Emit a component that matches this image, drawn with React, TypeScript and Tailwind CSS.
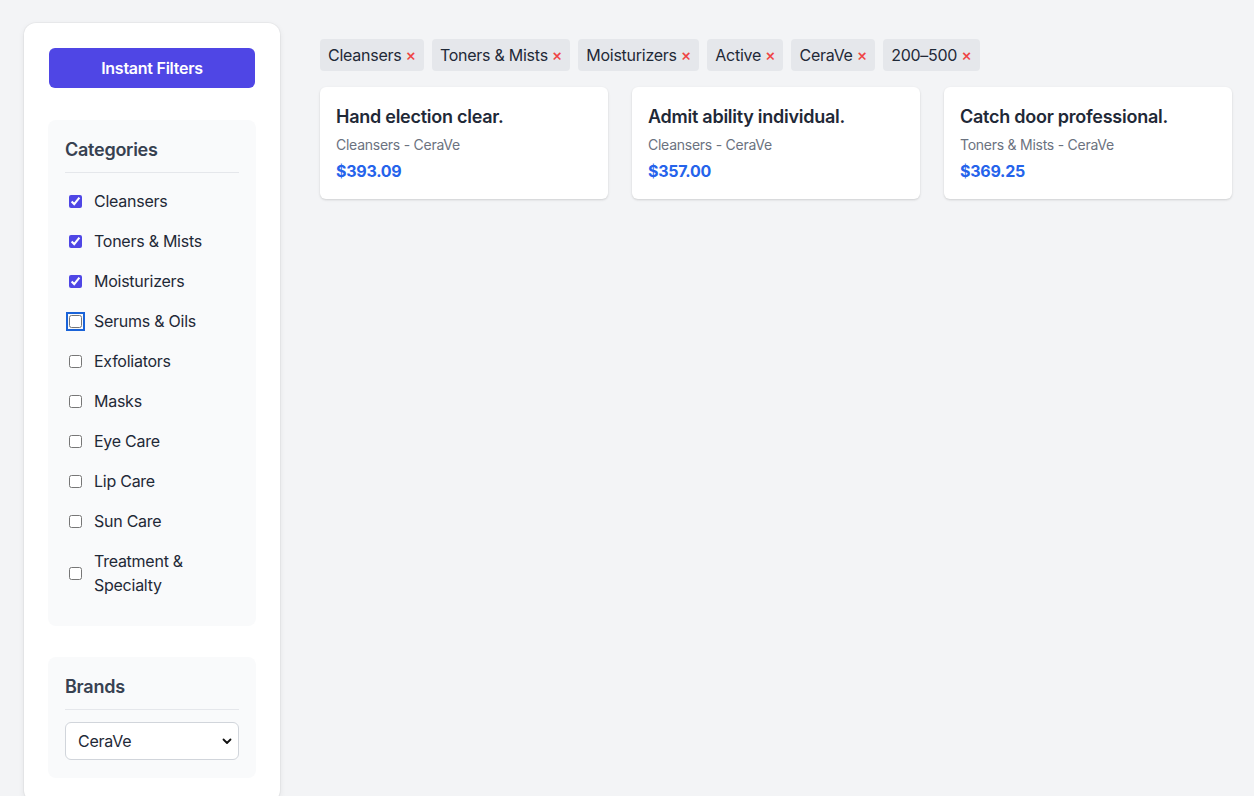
import React from "react";

const categories = [
  { name: "Cleansers", checked: true },
  { name: "Toners & Mists", checked: true },
  { name: "Moisturizers", checked: true },
  { name: "Serums & Oils", checked: false, focus: true },
  { name: "Exfoliators", checked: false },
  { name: "Masks", checked: false },
  { name: "Eye Care", checked: false },
  { name: "Lip Care", checked: false },
  { name: "Sun Care", checked: false },
  { name: "Treatment & Specialty", checked: false },
];

const chips = ["Cleansers", "Toners & Mists", "Moisturizers", "Active", "CeraVe", "200–500"];

const products = [
  { title: "Hand election clear.", sub: "Cleansers - CeraVe", price: "$393.09" },
  { title: "Admit ability individual.", sub: "Cleansers - CeraVe", price: "$357.00" },
  { title: "Catch door professional.", sub: "Toners & Mists - CeraVe", price: "$369.25" },
];

export default function App() {
  return (
    <div
      className="min-h-[796px] bg-[#f3f4f6] text-[#1f2937] flex items-start pl-6 pr-[22px] pt-[23px] tracking-[-0.016em]"
      style={{ fontFamily: "Inter, 'Noto Sans', sans-serif" }}
    >
      <aside className="w-[256px] shrink-0 bg-white rounded-xl shadow-[0_0_0_1px_rgba(0,0,0,0.03),0_2px_6px_rgba(0,0,0,0.08)] p-6">
        <button className="block w-[calc(100%-2px)] mx-px mt-px h-10 rounded-md bg-[#4f46e5] text-white font-semibold text-base tracking-[-0.016em]">
          Instant Filters
        </button>

        <section className="mt-8 bg-[#f9fafb] rounded-lg px-[17px] pt-4 pb-[21px]">
          <h3 className="text-lg font-semibold text-[#374151] pb-2 border-b border-[#e5e7eb] leading-7">
            Categories
          </h3>
          <ul className="mt-2">
            {categories.map((c) => (
              <li key={c.name} className="flex items-center py-2">
                <input
                  type="checkbox"
                  defaultChecked={c.checked}
                  className={
                    "ml-1 mr-3 w-[13px] h-[13px] shrink-0 accent-[#4f46e5] " +
                    (c.focus ? "outline-2 outline-[#1a63d8] outline-offset-1 rounded-[2px]" : "")
                  }
                />
                <span className="text-base leading-6 text-[#1f2937]">{c.name}</span>
              </li>
            ))}
          </ul>
        </section>

        <section className="mt-[31px] bg-[#f9fafb] rounded-lg px-[17px] pt-4 pb-[18px]">
          <h3 className="text-lg font-semibold text-[#374151] pb-2 border-b border-[#e5e7eb] leading-7">
            Brands
          </h3>
          <div className="relative mt-3">
            <select
              defaultValue="CeraVe"
              className="appearance-none w-full h-[38px] rounded-md border border-[#d1d5db] bg-white pl-3 pr-8 text-base text-[#1f2937] tracking-[-0.016em]"
            >
              <option>CeraVe</option>
            </select>
            <svg
              className="absolute right-[7px] top-1/2 -translate-y-1/2 pointer-events-none"
              width="10"
              height="10"
              viewBox="0 0 10 10"
              fill="none"
            >
              <path d="M1.5 3.5 L5 7 L8.5 3.5" stroke="#111" strokeWidth="1.8" strokeLinecap="round" strokeLinejoin="round" />
            </svg>
          </div>
        </section>
      </aside>

      <main className="flex-1 ml-10 pt-4">
        <div className="flex flex-wrap gap-2">
          {chips.map((c) => (
            <span key={c} className="inline-flex items-center h-8 px-2 rounded bg-[#e5e7eb] text-base text-[#1f2937]">
              {c}
              <span className="ml-1 text-[#ef4444] text-base font-medium">×</span>
            </span>
          ))}
        </div>
        <div className="mt-4 grid grid-cols-3 gap-6">
          {products.map((p) => (
            <div key={p.title} className="bg-white rounded-md shadow-[0_1px_3px_rgba(0,0,0,0.1),0_1px_2px_rgba(0,0,0,0.06)] p-4">
              <h4 className="text-lg font-semibold leading-7 text-[#1f2937]">{p.title}</h4>
              <p className="mt-1 text-sm text-[#6b7280] leading-5">{p.sub}</p>
              <p className="mt-1 text-base font-bold text-[#2563eb] leading-6">{p.price}</p>
            </div>
          ))}
        </div>
      </main>
    </div>
  );
}
